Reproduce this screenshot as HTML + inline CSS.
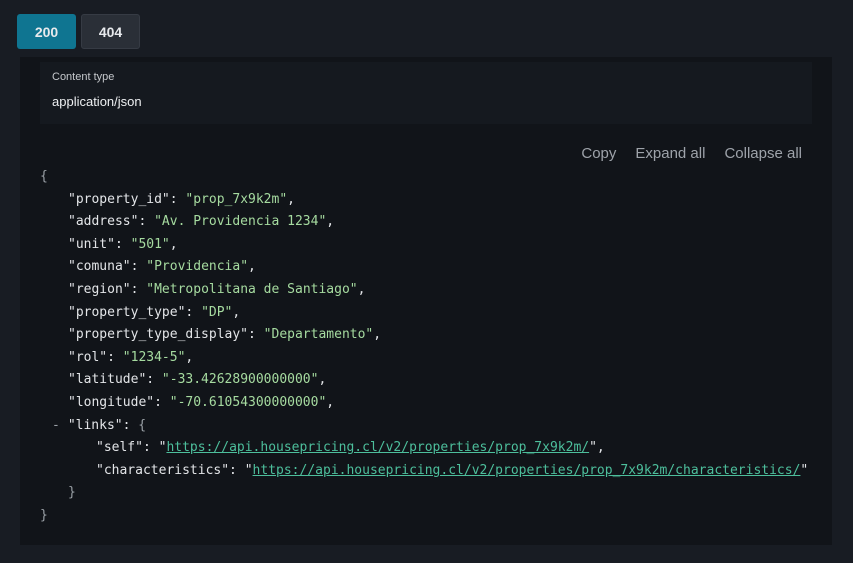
<!DOCTYPE html>
<html><head><style>
body{margin:0;width:853px;height:563px;background:#181c23;font-family:"Liberation Sans",sans-serif;overflow:hidden;position:relative}
.tab{position:absolute;top:14px;height:35px;width:59px;border-radius:3px;font-weight:bold;font-size:14px;color:#e8eaed;display:flex;align-items:center;justify-content:center}
.panel{position:absolute;left:20px;top:57px;width:812px;height:488px;background:#111419}
.ct{position:absolute;left:20px;top:5px;width:772px;height:62px;background:#15191f}
.ct .l{position:absolute;left:12px;top:9px;font-size:11px;color:#c5c8cc}
.ct .v{position:absolute;left:12px;top:32px;font-size:13px;color:#eef0f2}
.acts{position:absolute;top:88px;right:30px;font-size:15px;color:#9ea3aa}
.acts span{margin-left:19px}
.code{position:absolute;left:20px;top:109px;font-family:"DejaVu Sans Mono",monospace;font-size:13px;line-height:22.6px;color:#e3e5e8}
.code div{height:22.6px;white-space:pre}
.i1{padding-left:28px}.i2{padding-left:56px}
.s{color:#a6dba0}.u{color:#4dbf9c;text-decoration:underline}.p{color:#9aa0a6}
.m{position:relative;left:-16px;margin-right:-8px;color:#9aa0a6}
</style></head><body>
<div class="tab" style="left:17px;background:#0f7591">200</div>
<div class="tab" style="left:81px;background:#2a2f37;border:1px solid #363b44;box-sizing:border-box">404</div>
<div class="panel">
<div class="ct"><div class="l">Content type</div><div class="v">application/json</div></div>
<div class="acts"><span>Copy</span><span>Expand all</span><span>Collapse all</span></div>
<div class="code"><div class="p">{</div><div class="i1">"property_id": <span class="s">"prop_7x9k2m"</span>,</div><div class="i1">"address": <span class="s">"Av. Providencia 1234"</span>,</div><div class="i1">"unit": <span class="s">"501"</span>,</div><div class="i1">"comuna": <span class="s">"Providencia"</span>,</div><div class="i1">"region": <span class="s">"Metropolitana de Santiago"</span>,</div><div class="i1">"property_type": <span class="s">"DP"</span>,</div><div class="i1">"property_type_display": <span class="s">"Departamento"</span>,</div><div class="i1">"rol": <span class="s">"1234-5"</span>,</div><div class="i1">"latitude": <span class="s">"-33.42628900000000"</span>,</div><div class="i1">"longitude": <span class="s">"-70.61054300000000"</span>,</div><div class="i1"><span class="m">-</span>"links": <span class="p">{</span></div><div class="i2">"self": "<span class="u">https://api.housepricing.cl/v2/properties/prop_7x9k2m/</span>",</div><div class="i2">"characteristics": "<span class="u">https://api.housepricing.cl/v2/properties/prop_7x9k2m/characteristics/</span>"</div><div class="i1 p">}</div><div class="p">}</div></div>
</div>
</body></html>
